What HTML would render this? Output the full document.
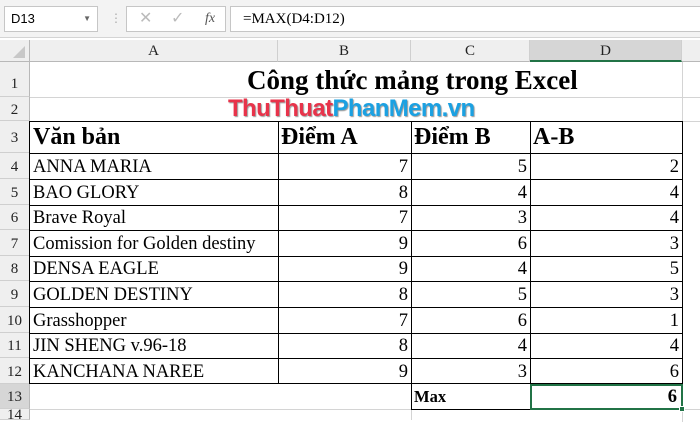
<!DOCTYPE html>
<html><head><meta charset="utf-8"><style>
*{margin:0;padding:0;box-sizing:border-box}
body{width:700px;height:420px;overflow:hidden;background:#fff;position:relative;font-family:"Liberation Serif",serif}
.a{position:absolute}
.tb{left:0;top:0;width:700px;height:38px;background:#f3f3f3;border-bottom:1px solid #d4d4d4}
.box{position:absolute;background:#fff;border:1px solid #c6c6c6}
.ch{top:40px;height:22px;background:#efefef;border-right:1px solid #cfcfcf;border-bottom:1px solid #b8b8b8;text-align:center;font-size:15px;line-height:22px;color:#222}
.rh{left:0;width:30px;background:#efefef;border-bottom:1px solid #cfcfcf;border-right:1px solid #b8b8b8;text-align:center;font-size:15px;color:#222}
.g{background:#d6d6d6}
.c{position:absolute;font-size:18.5px;color:#000;white-space:nowrap;overflow:hidden}
.r{text-align:right;padding-right:3px}
.hd{font-size:24px;font-weight:bold;line-height:31px}
</style></head><body>
<div class="a tb"></div>
<div class="box" style="left:4px;top:6px;width:94px;height:26px;font-family:'Liberation Sans',sans-serif;font-size:13px;line-height:24px;padding-left:6px">D13<span style="position:absolute;right:6px;top:0;font-size:8px;color:#666">▼</span></div>
<div class="a" style="left:110px;top:11px;color:#aaa;font-size:12px">⋮</div>
<div class="box" style="left:126px;top:6px;width:100px;height:26px;color:#bbb;font-size:16px;line-height:24px"><span style="position:absolute;left:12px">✕</span><span style="position:absolute;left:44px">✓</span><span style="position:absolute;left:78px;color:#555;font-style:italic;font-size:14px">fx</span></div>
<div class="box" style="left:230px;top:6px;width:475px;height:26px;font-size:15px;line-height:24px;padding-left:12px">=MAX(D4:D12)</div>
<div class="a" style="left:0;top:40px;width:30px;height:22px;background:#efefef;border-right:1px solid #b8b8b8;border-bottom:1px solid #b8b8b8"><div style="position:absolute;right:4px;bottom:3px;width:0;height:0;border-left:12px solid transparent;border-bottom:12px solid #c8c8c8"></div></div>
<div class="a ch" style="left:30px;width:248px">A</div>
<div class="a ch" style="left:278px;width:133px">B</div>
<div class="a ch" style="left:411px;width:119px">C</div>
<div class="a ch g" style="left:530px;width:152px;border-bottom:2px solid #217346">D</div>
<div class="a ch" style="left:682px;width:30px"></div>
<div id="rows"></div>
<div class="a" style="left:30px;top:97px;width:670px;height:1px;background:#d4d4d4"></div>
<div class="a" style="left:30px;top:121px;width:670px;height:1px;background:#d4d4d4"></div>
<div class="a" style="left:30px;top:409px;width:670px;height:1px;background:#d4d4d4"></div>
<div class="a" style="left:682px;top:62px;width:1px;height:360px;background:#d4d4d4"></div>
<div class="a" style="left:411px;top:384px;width:1px;height:36px;background:#d4d4d4"></div>
<div class="a" style="left:29px;top:121px;width:654px;height:263px;border:1px solid #000"></div>
<div class="a" style="left:278px;top:121px;width:1px;height:263px;background:#000"></div>
<div class="a" style="left:411px;top:121px;width:1px;height:289px;background:#000"></div>
<div class="a" style="left:530px;top:121px;width:1px;height:289px;background:#000"></div>
<div class="a" style="left:411px;top:409px;width:120px;height:1px;background:#000"></div>
<div class="a" style="left:530px;top:384px;width:153px;height:26px;border:2px solid #217346"></div>
<div class="a" style="left:679px;top:406px;width:6px;height:6px;background:#217346;border:1px solid #fff"></div>
<div class="a" style="left:247px;top:62px;font-weight:bold;font-size:27px;line-height:36px;white-space:nowrap">Công thức mảng trong Excel</div>
<div class="a" style="left:228px;top:94px;font-family:'Liberation Sans',sans-serif;font-weight:bold;font-size:24px;letter-spacing:-0.6px;line-height:30px;text-shadow:1px 1px 1px #999"><span style="color:#e8334a">ThuThuat</span><span style="color:#1ba1e2">PhanMem.vn</span></div>
<div class="c hd" style="left:33px;top:122px">Văn bản</div>
<div class="c hd" style="left:281px;top:122px">Điểm A</div>
<div class="c hd" style="left:414px;top:122px">Điểm B</div>
<div class="c hd" style="left:533px;top:122px">A-B</div>
<script>
var rows=[["ANNA MARIA",7,5,2],["BAO GLORY",8,4,4],["Brave Royal",7,3,4],["Comission for Golden destiny",9,6,3],["DENSA EAGLE",9,4,5],["GOLDEN DESTINY",8,5,3],["Grasshopper",7,6,1],["JIN SHENG v.96-18",8,4,4],["KANCHANA NAREE",9,3,6]];
var h='';
var tops=[62,97,121,153,179,205,230,256,281,307,333,358,384,409,420];
for(var i=0;i<14;i++){var t=tops[i],hh=tops[i+1]-t;h+='<div class="a rh'+(i==12?' g':'')+'" style="top:'+t+'px;height:'+hh+'px;line-height:'+(hh+(i==0?10:2))+'px">'+(i+1)+'</div>';}
for(var i=0;i<9;i++){var t=tops[i+3],hh=tops[i+4]-t,r=rows[i],s='top:'+t+'px;height:'+hh+'px;line-height:'+(hh+2)+'px;';
h+='<div class="c" style="left:33px;width:244px;'+s+'">'+r[0]+'</div>';
h+='<div class="c r" style="left:278px;width:133px;'+s+'">'+r[1]+'</div>';
h+='<div class="c r" style="left:411px;width:119px;'+s+'">'+r[2]+'</div>';
h+='<div class="c r" style="left:530px;width:152px;'+s+'">'+r[3]+'</div>';
if(i<8)h+='<div class="a" style="left:30px;top:'+tops[i+4]+'px;width:652px;height:1px;background:#000"></div>';}
h+='<div class="c" style="left:414px;top:384px;line-height:26px;font-weight:bold;font-size:16.5px">Max</div>';
h+='<div class="c r" style="left:530px;width:150px;top:384px;line-height:26px;font-weight:bold">6</div>';
h+='<div class="a" style="left:30px;top:153px;width:652px;height:1px;background:#000"></div>';
document.getElementById('rows').innerHTML=h;
</script>
</body></html>
